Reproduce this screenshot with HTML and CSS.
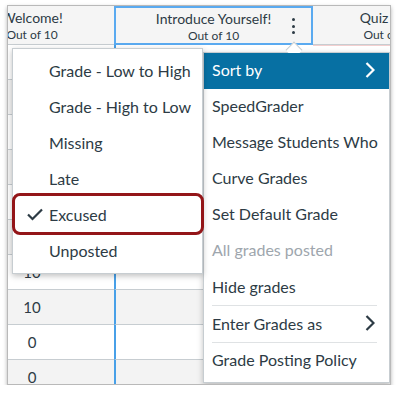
FILE: index.html
```html
<!DOCTYPE html>
<html lang="en">
<head>
    <meta charset="UTF-8" />
    <title>Gradebook - Column Menu</title>
    <link rel="stylesheet" href="styles.css">
</head>
<body>
    <div class="frame">
        <div class="sheet">
            <div class="head">
                <div class="title">Welcome!</div>
                <div class="points">Out of 10</div>
            </div>
            <div class="head selected">
                <div class="title">Introduce Yourself!</div>
                <div class="points">Out of 10</div>
                <span class="kebab"><i></i><i></i><i></i></span>
            </div>
            <div class="head">
                <div class="title">Quiz One</div>
                <div class="points">Out of 10</div>
            </div>

            <div class="cell">10</div><div class="cell active"></div><div class="cell late first"></div>
            <div class="cell alt">10</div><div class="cell alt active"></div><div class="cell alt late"></div>
            <div class="cell">10</div><div class="cell active"></div><div class="cell late"></div>
            <div class="cell alt">10</div><div class="cell alt active"></div><div class="cell alt late"></div>
            <div class="cell">10</div><div class="cell active"></div><div class="cell late"></div>
            <div class="cell alt">10</div><div class="cell alt active"></div><div class="cell alt late"></div>
            <div class="cell">10</div><div class="cell active"></div><div class="cell late"></div>
            <div class="cell alt">10</div><div class="cell alt active"></div><div class="cell alt late"></div>
            <div class="cell">0</div><div class="cell active"></div><div class="cell late"></div>
            <div class="cell alt">0</div><div class="cell alt active"></div><div class="cell alt late"></div>
        </div>

        <!-- sort by submenu -->
        <ul class="menu submenu">
            <li>Grade - Low to High</li>
            <li>Grade - High to Low</li>
            <li>Missing</li>
            <li>Late</li>
            <li class="checked">
                <svg class="check" width="16" height="13" viewBox="0 0 16 13"><polyline points="1,6.5 5.5,11 15,1.5" /></svg>
                Excused
            </li>
            <li>Unposted</li>
            <span class="callout"></span>
        </ul>

        <!-- column options -->
        <ul class="menu options">
            <li class="current">Sort by
                <svg class="chevron" width="10" height="16" viewBox="0 0 10 16"><polyline points="1.5,1 8.5,8 1.5,15" /></svg>
            </li>
            <li>SpeedGrader</li>
            <li>Message Students Who</li>
            <li>Curve Grades</li>
            <li>Set Default Grade</li>
            <li class="disabled">All grades posted</li>
            <li class="divided">Hide grades</li>
            <li class="divided">Enter Grades as
                <svg class="chevron" width="10" height="16" viewBox="0 0 10 16"><polyline points="1.5,1 8.5,8 1.5,15" /></svg>
            </li>
            <li>Grade Posting Policy</li>
        </ul>
    </div>
</body>
</html>
```

FILE: styles.css
```css
* {
    margin: 0;
    padding: 0;
    box-sizing: border-box;
    font-family: Lato, "Open Sans", sans-serif;
}

body {
    background-color: #fff;
    color: #2d3b45;
}

.frame {
    position: relative;
    width: 384px;
    height: 380px;
    margin: 5px 0 0 7px;
    border: 1px solid #b9b9b9;
    box-shadow: 0 2px 4px rgba(0, 0, 0, 0.3);
    overflow: hidden;
}

.sheet {
    display: grid;
    grid-template-columns: 164px 199px 152px;
    margin-left: -58px;
}

.head {
    position: relative;
    height: 39px;
    background-color: #f5f5f5;
    border-bottom: 1px solid #c7cdd1;
    text-align: center;
    white-space: nowrap;
    padding-top: 3px;
}

.head.selected {
    border: 2px solid #5aaaf0;
    padding-top: 2px;
}

.title {
    font-size: 14px;
    line-height: 18px;
}

.points {
    font-size: 12px;
    line-height: 16px;
}

.kebab {
    position: absolute;
    left: 176px;
    top: 10px;
    display: flex;
    flex-direction: column;
    gap: 3.5px;
}

.kebab i {
    display: block;
    width: 3px;
    height: 3px;
    border-radius: 50%;
    background-color: #2d3b45;
}

.cell {
    height: 35px;
    border-bottom: 1px solid #c7cdd1;
    background-color: #fff;
    font-size: 15px;
    line-height: 34px;
    text-align: center;
}

.cell.alt {
    background-color: #f3f3f3;
}

.cell.active {
    border-left: 2px solid #48a0e8;
}

.cell.late.first {
    border-top: 1px solid #f3cfcf;
}

.menu {
    position: absolute;
    list-style: none;
    background-color: #fff;
    border: 1px solid #c7cdd1;
    box-shadow: 0 2px 6px rgba(0, 0, 0, 0.25);
}

.menu li {
    position: relative;
    display: flex;
    align-items: center;
    height: 36px;
    padding-bottom: 3px;
    font-size: 16px;
    white-space: nowrap;
}

.submenu {
    left: 4px;
    top: 42px;
    width: 191px;
    padding: 5px 0 3px;
    z-index: 2;
}

.submenu li {
    padding-left: 36px;
}

.check {
    position: absolute;
    left: 14px;
    top: 10px;
}

.check polyline {
    fill: none;
    stroke: #2d3b45;
    stroke-width: 2.2;
}

.callout {
    position: absolute;
    left: -1px;
    top: 144px;
    width: 192px;
    height: 42px;
    border: 3px solid #931518;
    border-radius: 8px;
}

.options {
    left: 195px;
    top: 46px;
    width: 187px;
    padding-bottom: 3px;
    z-index: 1;
}

.options::before {
    content: "";
    position: absolute;
    left: 84px;
    top: -9px;
    width: 11px;
    height: 11px;
    background-color: #fff;
    border-top: 1px solid #c7cdd1;
    border-left: 1px solid #c7cdd1;
    transform: rotate(45deg);
}

.options li {
    padding-left: 8px;
}

.options li.current {
    background-color: #0770a3;
    color: #fff;
    padding-bottom: 3px;
}

.options li.disabled {
    color: #9ea6ad;
}

.options li.divided {
    height: 37px;
    padding-bottom: 2px;
}

.options li.divided::after {
    content: "";
    position: absolute;
    left: 8px;
    right: 12px;
    bottom: 0;
    border-bottom: 1px solid #dfe2e4;
}

.chevron {
    position: absolute;
    left: 161px;
    top: 9px;
}

.chevron polyline {
    fill: none;
    stroke: #2d3b45;
    stroke-width: 2.2;
}

.current .chevron polyline {
    stroke: #fff;
}
```
